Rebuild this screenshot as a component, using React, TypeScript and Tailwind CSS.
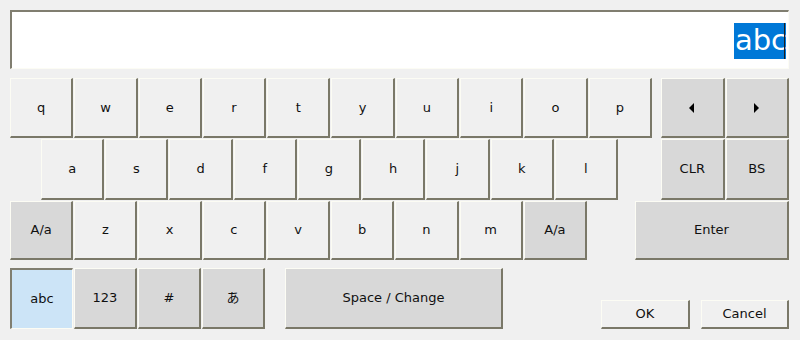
import React from "react";

const raised =
  "border-t border-l border-t-[#fcfcf4] border-l-[#fcfcf4] border-b-2 border-r-2 border-b-[#7a7868] border-r-[#7a7868]";
const sunken =
  "border-t-2 border-l-2 border-t-[#807e70] border-l-[#807e70] border-b border-r border-b-[#fcfcf4] border-r-[#fcfcf4]";

type KeyProps = {
  label?: React.ReactNode;
  gray?: boolean;
  className?: string;
  pressed?: boolean;
};

function Key({ label, gray, className = "", pressed }: KeyProps) {
  const bg = pressed ? "bg-[#cce4f7]" : gray ? "bg-[#d8d8d8]" : "bg-[#f0f0f0]";
  return (
    <div
      className={`${pressed ? sunken : raised} ${bg} flex items-center justify-center text-[13px] text-[#101010] ${className}`}
    >
      {label}
    </div>
  );
}

const LeftTri = () => (
  <svg width="6" height="10" viewBox="0 0 6 10">
    <polygon points="5,0 5,10 0,5" fill="#000" />
  </svg>
);
const RightTri = () => (
  <svg width="6" height="10" viewBox="0 0 6 10">
    <polygon points="0,0 0,10 5,5" fill="#000" />
  </svg>
);

export default function App() {
  const row1 = ["q", "w", "e", "r", "t", "y", "u", "i", "o", "p"];
  const row2 = ["a", "s", "d", "f", "g", "h", "j", "k", "l"];
  const row3 = ["z", "x", "c", "v", "b", "n", "m"];
  return (
    <div
      className="w-[800px] h-[340px] bg-[#f0f0f0] px-[10px] pt-[10px] overflow-hidden"
      style={{ fontFamily: '"DejaVu Sans", "Noto Sans CJK JP", sans-serif' }}
    >
      <div
        className={`${sunken} bg-white h-[59px] w-[779px] flex items-center justify-end pr-[2px]`}
      >
        <div className="flex items-center h-[36px] bg-[#0078d7] text-white text-[29px] leading-none px-[1px] mt-[1px]">
          <span>abc</span>
          <span className="w-[1px] h-[36px] bg-[#202020] -ml-[3px]" />
        </div>
      </div>

      {/* Row 1 */}
      <div className="flex mt-[9px] h-[60px]">
        <div className="flex w-[642px] gap-[1px]">
          {row1.map((k) => (
            <Key key={k} label={k} className="flex-1" />
          ))}
        </div>
        <div className="flex ml-[9px] w-[128px] gap-[1px]">
          <Key label={<LeftTri />} gray className="flex-1" />
          <Key label={<RightTri />} gray className="flex-1" />
        </div>
      </div>

      {/* Row 2 */}
      <div className="flex mt-[1px] h-[61px]">
        <div className="flex ml-[31px] w-[577px] gap-[1px]">
          {row2.map((k) => (
            <Key key={k} label={k} className="flex-1" />
          ))}
        </div>
        <div className="flex ml-[43px] w-[128px] gap-[1px]">
          <Key label="CLR" gray className="flex-1" />
          <Key label="BS" gray className="flex-1" />
        </div>
      </div>

      {/* Row 3 */}
      <div className="flex mt-[1px] h-[59px]">
        <div className="flex w-[577px] gap-[1px]">
          <Key label="A/a" gray className="flex-1" />
          {row3.map((k) => (
            <Key key={k} label={k} className="flex-1" />
          ))}
          <Key label="A/a" gray className="flex-1" />
        </div>
        <div className="flex ml-[48px] w-[154px]">
          <Key label="Enter" gray className="flex-1" />
        </div>
      </div>

      {/* Row 4 */}
      <div className="flex mt-[8px] h-[61px] items-end">
        <div className="flex w-[255px] h-[61px] gap-[1px]">
          <Key label="abc" pressed className="flex-1" />
          <Key label="123" gray className="flex-1" />
          <Key label="#" gray className="flex-1" />
          <Key label="あ" gray className="flex-1" />
        </div>
        <Key label="Space / Change" gray className="ml-[20px] w-[218px] h-[61px]" />
        <Key label="OK" className="ml-[98px] w-[89px] h-[29px]" />
        <Key label="Cancel" className="ml-[11px] w-[88px] h-[29px]" />
      </div>
    </div>
  );
}
